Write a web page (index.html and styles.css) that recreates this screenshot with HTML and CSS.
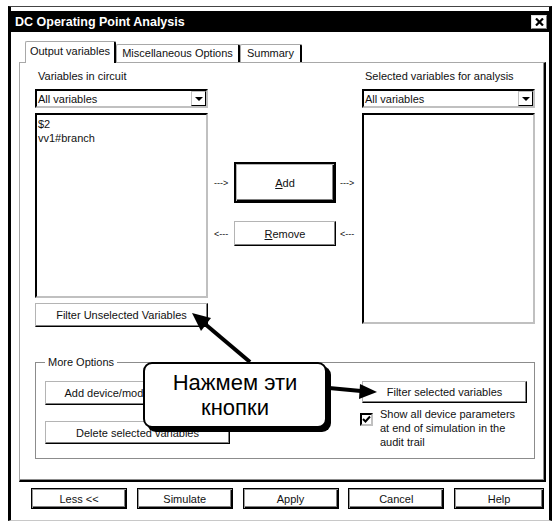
FILE: index.html
```html
<!DOCTYPE html>
<html lang="en">
<head>
    <meta charset="UTF-8">
    <title>DC Operating Point Analysis</title>
    <link rel="stylesheet" href="styles.css">
</head>
<body>

    <!-- Dialog window -->
    <div class="window">
        <div class="titlebar">
            <span class="title">DC Operating Point Analysis</span>
            <span class="close">
                <svg width="9" height="8" viewBox="0 0 9 8">
                    <path d="M1 0.5 L8 7.5 M8 0.5 L1 7.5" stroke="#000" stroke-width="2.2" fill="none"/>
                </svg>
            </span>
        </div>

        <div class="tabs">
            <div class="tab active tab-output">Output variables</div>
            <div class="tab tab-misc">Miscellaneous Options</div>
            <div class="tab tab-summary">Summary</div>
        </div>

        <div class="panel">
            <div class="lists">
                <div class="col">
                    <div class="label">Variables in circuit</div>
                    <div class="combo"><span>All variables</span><span class="drop"></span></div>
                    <div class="listbox short">
                        <div>$2</div>
                        <div>vv1#branch</div>
                    </div>
                    <button class="btn filter">Filter Unselected Variables</button>
                </div>

                <div class="mid">
                    <div class="move add-row">
                        <span class="arr">---&gt;</span>
                        <button class="btn default"><u>A</u>dd</button>
                        <span class="arr">---&gt;</span>
                    </div>
                    <div class="move remove-row">
                        <span class="arr">&lt;---</span>
                        <button class="btn"><u>R</u>emove</button>
                        <span class="arr">&lt;---</span>
                    </div>
                </div>

                <div class="col">
                    <div class="label">Selected variables for analysis</div>
                    <div class="combo"><span>All variables</span><span class="drop"></span></div>
                    <div class="listbox tall"></div>
                </div>
            </div>

            <fieldset class="group">
                <legend>More Options</legend>
                <div class="group-left">
                    <button class="btn wide">Add device/model parameters</button>
                    <button class="btn wide delete">Delete selected variables</button>
                </div>
                <div class="group-right">
                    <button class="btn filter-sel">Filter selected variables</button>
                    <div class="check-row">
                        <span class="checkbox">
                            <svg width="9" height="9" viewBox="0 0 9 9">
                                <path d="M1 4 L3.5 6.5 L8 1.5" stroke="#000" stroke-width="2" fill="none"/>
                            </svg>
                        </span>
                        <span class="check-text">Show all device parameters<br>at end of simulation in the<br>audit trail</span>
                    </div>
                </div>
            </fieldset>
        </div>

        <div class="footer">
            <button class="btn foot">Less &lt;&lt;</button>
            <button class="btn foot">Simulate</button>
            <button class="btn foot">Apply</button>
            <button class="btn foot">Cancel</button>
            <button class="btn foot help">Help</button>
        </div>
    </div>

    <!-- Annotation over the dialog -->
    <svg class="arrows" width="554" height="523" viewBox="0 0 554 523">
        <line x1="250" y1="362" x2="205" y2="324" stroke="#000" stroke-width="4"/>
        <polygon points="192,313 211,318 201,331" fill="#000"/>
        <line x1="329" y1="388" x2="361" y2="391" stroke="#000" stroke-width="4"/>
        <polygon points="377,392 360,384 359,399" fill="#000"/>
    </svg>

    <div class="callout">Нажмем эти<br>кнопки</div>

</body>
</html>
```

FILE: styles.css
```css
* {
    box-sizing: border-box;
}

body {
    margin: 0;
    width: 554px;
    height: 523px;
    overflow: hidden;
    position: relative;
    background-color: #fff;
    font-family: "Liberation Sans", Arial, sans-serif;
    font-size: 11px;
    color: #111;
}

button {
    font: inherit;
    color: #111;
    background-color: #fff;
    padding: 0;
    margin: 0;
}

/* Window frame */
.window {
    margin: 6px 0 0 8px;
    width: 544px;
    height: 515px;
    border-left: 3px solid #000;
    border-right: 3px solid #000;
    border-top: 1px solid #444;
    border-bottom: 1px solid #c8c8c8;
    padding-top: 4px;
}

.titlebar {
    height: 21px;
    background-color: #000;
    color: #fff;
    display: flex;
    align-items: center;
    justify-content: space-between;
    padding: 0 2px 0 4px;
}

.title {
    font-weight: bold;
    font-size: 12.5px;
}

.close {
    width: 16px;
    height: 14px;
    background-color: #fff;
    border: 1px solid;
    border-color: #e0e0e0 #808080 #808080 #e0e0e0;
    display: flex;
    align-items: center;
    justify-content: center;
}

/* Tabs */
.tabs {
    display: flex;
    align-items: flex-end;
    margin: 9px 0 0 14px;
    height: 21px;
}

.tab {
    height: 18px;
    line-height: 16px;
    text-align: center;
    background-color: #fff;
    border-top: 1px solid #a8a8a8;
    border-left: 1px solid #a8a8a8;
    border-right: 2px solid #000;
    border-radius: 2px 2px 0 0;
}

.tab.active {
    height: 22px;
    line-height: 18px;
    margin-bottom: -1px;
    position: relative;
    z-index: 1;
}

.tab-output { width: 91px; }
.tab-misc { width: 124px; }
.tab-summary { width: 62px; }

/* Tab page */
.panel {
    margin-left: 8px;
    width: 527px;
    height: 420px;
    border-top: 1px solid #a8a8a8;
    border-left: 1px solid #a8a8a8;
    border-right: 2px solid #000;
    border-bottom: 2px solid #000;
    box-shadow: inset -1px -1px 0 #8c8c8c;
    padding: 7px 0 0 15px;
}

.lists {
    display: flex;
}

.col {
    width: 173px;
}

.label {
    height: 13px;
    line-height: 13px;
    padding-left: 3px;
}

.combo {
    margin-top: 6px;
    height: 19px;
    border: 2px solid;
    border-color: #000 #c0c0c0 #c0c0c0 #000;
    display: flex;
    align-items: center;
    justify-content: space-between;
    padding-left: 1px;
}

.drop {
    width: 15px;
    height: 15px;
    border: 1px solid;
    border-color: #c0c0c0 #000 #000 #c0c0c0;
    display: flex;
    align-items: center;
    justify-content: center;
}

.drop::after {
    content: "";
    border-left: 4px solid transparent;
    border-right: 4px solid transparent;
    border-top: 4px solid #000;
}

.listbox {
    margin-top: 5px;
    border: 2px solid;
    border-color: #000 #c0c0c0 #c0c0c0 #000;
    padding: 2px 1px;
    line-height: 14px;
}

.listbox.short { height: 185px; }
.listbox.tall { height: 211px; }

.btn {
    border: 1px solid;
    border-color: #b4b4b4 #000 #000 #b4b4b4;
    box-shadow: inset -1px -1px 0 #808080;
    text-align: center;
}

.btn.filter {
    display: block;
    margin-top: 5px;
    width: 173px;
    height: 24px;
}

/* Add / Remove column */
.mid {
    width: 154px;
    padding: 92px 0 0 6px;
}

.move {
    display: flex;
    align-items: center;
}

.move .btn {
    width: 102px;
    margin: 0 4px 0 6px;
}

.add-row {
    height: 41px;
}

.add-row .btn {
    height: 41px;
}

.remove-row {
    margin-top: 18px;
    height: 25px;
}

.remove-row .btn {
    height: 25px;
}

.btn.default {
    border: 2px solid #000;
    box-shadow: inset 1px 1px 0 #b4b4b4, inset -1px -1px 0 #000, inset -2px -2px 0 #808080;
}

.arr {
    font-size: 9px;
    width: 14px;
    white-space: nowrap;
}

/* More Options group */
.group {
    margin: 29px 0 0 0;
    width: 500px;
    height: 103px;
    border: 1px solid #8c8c8c;
    padding: 12px 0 0 9px;
    display: flex;
    align-items: flex-start;
}

.group legend {
    padding: 0 3px;
    line-height: 13px;
}

.group-left {
    width: 185px;
}

.btn.wide {
    display: block;
    width: 185px;
    height: 24px;
}

.btn.wide.delete {
    margin-top: 16px;
    height: 23px;
}

.group-right {
    margin-left: 130px;
}

.btn.filter-sel {
    display: block;
    margin-left: 2px;
    width: 165px;
    height: 22px;
}

.check-row {
    display: flex;
    align-items: flex-start;
    margin-top: 4px;
}

.checkbox {
    margin-top: 6px;
    width: 13px;
    height: 13px;
    border: 2px solid;
    border-color: #000 #c0c0c0 #c0c0c0 #000;
    display: flex;
    align-items: center;
    justify-content: center;
}

.check-text {
    margin-left: 7px;
    line-height: 14px;
}

/* Bottom buttons */
.footer {
    display: flex;
    gap: 9.75px;
    margin-top: 6px;
    padding-left: 20px;
}

.btn.foot {
    width: 96px;
    height: 21px;
    border: 1px solid #000;
    box-shadow: inset 1px 1px 0 #9a9a9a, inset -1px -1px 0 #000, inset -2px -2px 0 #808080;
}

.btn.foot.help {
    width: 90px;
}

/* Annotation */
.arrows {
    position: absolute;
    left: 0;
    top: 0;
    pointer-events: none;
}

.callout {
    position: absolute;
    left: 143px;
    top: 362px;
    width: 184px;
    height: 66px;
    background-color: #fff;
    border: 2px solid #000;
    border-radius: 9px;
    box-shadow: 4px 4px 0 #000;
    padding-top: 6px;
    text-align: center;
    font-size: 22px;
    line-height: 25px;
    color: #000;
}
```
